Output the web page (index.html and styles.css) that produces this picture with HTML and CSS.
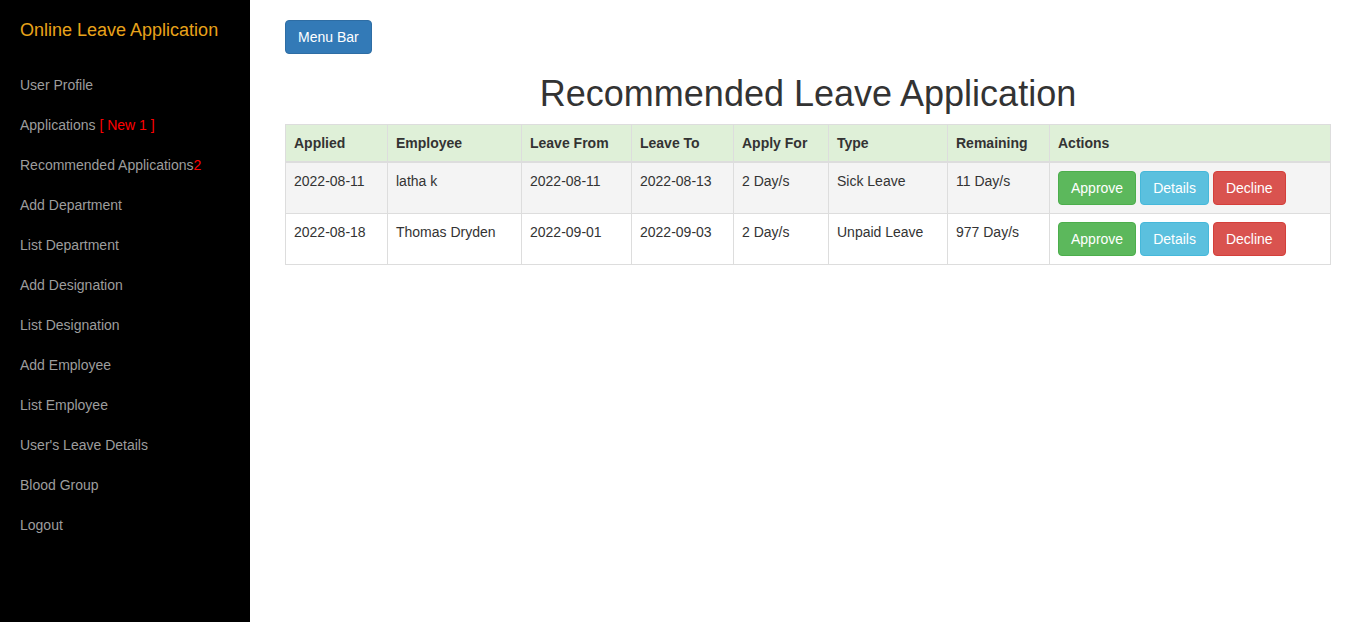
FILE: index.html
```html
<!DOCTYPE html>
<html>
<head>
<meta charset="utf-8">
<title>Recommended Leave Application</title>
<link rel="stylesheet" href="styles.css">
</head>
<body>
<div class="layout">
  <aside class="sidebar">
    <div class="brand">Online Leave Application</div>
    <nav class="nav">
      <a href="#">User Profile</a>
      <a href="#">Applications <span class="hot">[ New 1 ]</span></a>
      <a href="#">Recommended Applications<span class="hot">2</span></a>
      <a href="#">Add Department</a>
      <a href="#">List Department</a>
      <a href="#">Add Designation</a>
      <a href="#">List Designation</a>
      <a href="#">Add Employee</a>
      <a href="#">List Employee</a>
      <a href="#">User's Leave Details</a>
      <a href="#">Blood Group</a>
      <a href="#">Logout</a>
    </nav>
  </aside>
  <main class="main">
    <div class="toolbar"><button class="btn btn-primary">Menu Bar</button></div>
    <h1 class="title">Recommended Leave Application</h1>
    <table class="table">
      <colgroup>
        <col class="c1"><col class="c2"><col class="c3"><col class="c4"><col class="c5"><col class="c6"><col class="c7"><col>
      </colgroup>
      <thead>
        <tr>
          <th>Applied</th><th>Employee</th><th>Leave From</th><th>Leave To</th><th>Apply For</th><th>Type</th><th>Remaining</th><th>Actions</th>
        </tr>
      </thead>
      <tbody>
        <tr class="striped">
          <td>2022-08-11</td><td>latha k</td><td>2022-08-11</td><td>2022-08-13</td><td>2 Day/s</td><td>Sick Leave</td><td>11 Day/s</td>
          <td class="actions"><button class="btn btn-success">Approve</button><button class="btn btn-info">Details</button><button class="btn btn-danger">Decline</button></td>
        </tr>
        <tr>
          <td>2022-08-18</td><td>Thomas Dryden</td><td>2022-09-01</td><td>2022-09-03</td><td>2 Day/s</td><td>Unpaid Leave</td><td>977 Day/s</td>
          <td class="actions"><button class="btn btn-success">Approve</button><button class="btn btn-info">Details</button><button class="btn btn-danger">Decline</button></td>
        </tr>
      </tbody>
    </table>
  </main>
</div>
</body>
</html>
```
FILE: styles.css
```css
* { box-sizing: border-box; }
html, body { margin: 0; padding: 0; height: 100%; }
body {
  font-family: "Liberation Sans", Arial, sans-serif;
  font-size: 14px;
  line-height: 20px;
  color: #333;
  background: #fff;
}
.layout { display: flex; min-height: 100%; }
.sidebar {
  width: 250px;
  flex: 0 0 250px;
  background: #000;
  min-height: 622px;
}
.brand {
  padding: 20px 20px 25px;
  font-size: 18px;
  line-height: 20px;
  color: #e8a31a;
}
.nav { display: flex; flex-direction: column; }
.nav a {
  display: block;
  padding: 10px 20px;
  line-height: 20px;
  color: #9d9d9d;
  text-decoration: none;
}
.nav .hot { color: #ff0000; }
.main {
  flex: 1;
  padding: 20px 35px 0;
}
.toolbar { display: flex; }
.btn {
  display: inline-block;
  vertical-align: top;
  font-family: inherit;
  font-size: 14px;
  line-height: 20px;
  padding: 6px 12px;
  border: 1px solid transparent;
  border-radius: 4px;
  color: #fff;
  cursor: pointer;
}
.btn-primary { background: #337ab7; border-color: #2e6da4; }
.btn-success { background: #5cb85c; border-color: #4cae4c; }
.btn-info { background: #5bc0de; border-color: #46b8da; }
.btn-danger { background: #d9534f; border-color: #d43f3a; }
.title {
  margin: 20px 0 10px;
  font-size: 36px;
  font-weight: 500;
  line-height: 1.1;
  text-align: center;
  color: #333;
}
.table {
  width: 100%;
  border-collapse: collapse;
  border: 1px solid #ddd;
  table-layout: fixed;
}
.c1 { width: 102px; }
.c2 { width: 134px; }
.c3 { width: 110px; }
.c4 { width: 102px; }
.c5 { width: 95px; }
.c6 { width: 119px; }
.c7 { width: 102px; }
.table th, .table td {
  border: 1px solid #ddd;
  padding: 8px;
  text-align: left;
  vertical-align: top;
  line-height: 20px;
}
.table th {
  background: #dff0d8;
  font-weight: bold;
  border-bottom-width: 2px;
}
.table tr.striped td { background: #f4f4f4; }
.actions { white-space: nowrap; font-size: 0; line-height: 0; }
.actions .btn { margin-right: 4px; }
```
